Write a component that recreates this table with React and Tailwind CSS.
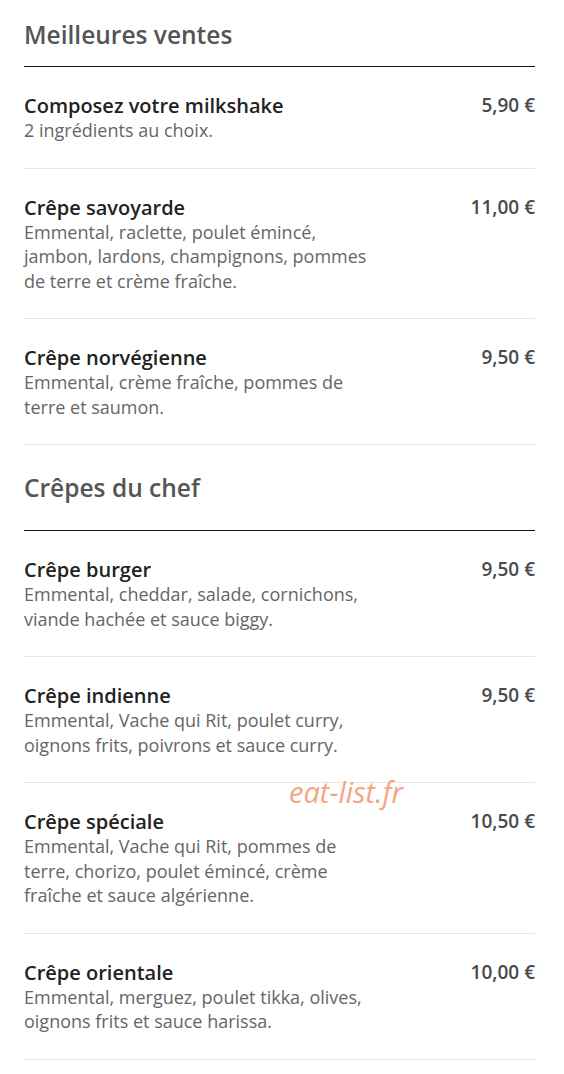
import React from 'react';

const sections = [
  {
    title: 'Meilleures ventes',
    head: 'pt-5 pb-4',
    items: [
      { name: 'Composez votre milkshake', desc: '2 ingrédients au choix.', price: '5,90 €' },
      {
        name: 'Crêpe savoyarde',
        desc: 'Emmental, raclette, poulet émincé, jambon, lardons, champignons, pommes de terre et crème fraîche.',
        price: '11,00 €',
      },
      {
        name: 'Crêpe norvégienne',
        desc: 'Emmental, crème fraîche, pommes de terre et saumon.',
        price: '9,50 €',
      },
    ],
  },
  {
    title: 'Crêpes du chef',
    head: 'pt-[28px] pb-[27px]',
    items: [
      {
        name: 'Crêpe burger',
        desc: 'Emmental, cheddar, salade, cornichons, viande hachée et sauce biggy.',
        price: '9,50 €',
      },
      {
        name: 'Crêpe indienne',
        desc: 'Emmental, Vache qui Rit, poulet curry, oignons frits, poivrons et sauce curry.',
        price: '9,50 €',
      },
      {
        name: 'Crêpe spéciale',
        desc: 'Emmental, Vache qui Rit, pommes de terre, chorizo, poulet émincé, crème fraîche et sauce algérienne.',
        price: '10,50 €',
      },
      {
        name: 'Crêpe orientale',
        desc: 'Emmental, merguez, poulet tikka, olives, oignons frits et sauce harissa.',
        price: '10,00 €',
      },
    ],
  },
];

const MenuItem = ({ item }) => (
  <div className="flex justify-between pt-[26px] pb-[25px] border-b border-[#e6e6e6]">
    <div className="w-[350px]">
      <div className="text-[20px] leading-[25px] font-semibold text-[#222]">{item.name}</div>
      <div className="text-[18px] leading-[24.5px] text-[#666]">{item.desc}</div>
    </div>
    <div className="text-[19px] leading-[25px] font-semibold text-[#4a4a4a]">{item.price}</div>
  </div>
);

export default function App() {
  return (
    <div
      className="relative bg-white min-h-[1074px] pl-6 pr-[29px]"
      style={{ fontFamily: '"Open Sans", "Liberation Sans", sans-serif' }}
    >
      {sections.map((s) => (
        <div key={s.title}>
          <h2 className={`${s.head} text-[24.5px] leading-[30px] font-semibold text-[#555] border-b border-[#111]`}>
            {s.title}
          </h2>
          {s.items.map((it) => (
            <MenuItem key={it.name} item={it} />
          ))}
        </div>
      ))}
      <div className="absolute left-[289px] top-[772px] text-[29px] italic text-[#f4a582] leading-[40px]">
        eat-list.fr
      </div>
    </div>
  );
}
